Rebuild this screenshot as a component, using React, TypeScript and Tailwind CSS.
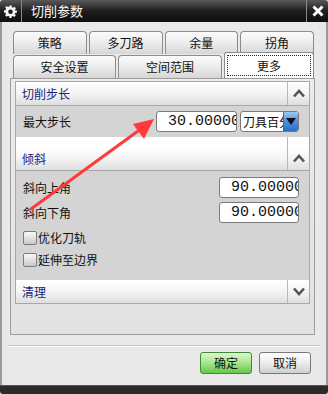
import React from "react";

const font = { fontFamily: '"Noto Sans CJK SC", "Noto Sans", sans-serif' };

function Tab({ label, selected, className = "" }: { label: string; selected?: boolean; className?: string }) {
  if (selected) {
    return (
      <div className={`h-[26px] -mt-[2px] rounded-t-[3px] border border-b-0 border-[#8a8a8a] bg-white p-[2px] ${className}`}>
        <div className="h-full border border-dotted border-[#222] flex items-center justify-center text-[12px] text-[#111]">
          {label}
        </div>
      </div>
    );
  }
  return (
    <div
      className={`h-[23px] rounded-t-[4px] border border-b-0 border-[#8c8c8c] bg-gradient-to-b from-[#fbfbfb] via-[#ececec] to-[#d6d6d6] flex items-center justify-center text-[12px] text-[#111] ${className}`}
    >
      {label}
    </div>
  );
}

function SectionHeader({ title, open }: { title: string; open: boolean }) {
  return (
    <div className="h-[24px] flex border-b border-[#a8a8a8] bg-gradient-to-b from-white via-[#f4f4f4] to-[#dedede]">
      <div className="flex-1 flex items-center pl-[6px] text-[12px] text-[#17237a]">{title}</div>
      <div className="w-[22px] border-l border-[#b8b8b8] flex items-center justify-center">
        <svg width="12" height="9" viewBox="0 0 12 9">
          {open ? (
            <path d="M1 7.5 L6 2 L11 7.5" fill="none" stroke="#555" strokeWidth="2.6" />
          ) : (
            <path d="M1 1.5 L6 7 L11 1.5" fill="none" stroke="#555" strokeWidth="2.6" />
          )}
        </svg>
      </div>
    </div>
  );
}

function NumInput({ value, className = "" }: { value: string; className?: string }) {
  return (
    <div
      className={`h-[21px] rounded-[3px] border border-[#7a7a7a] bg-white overflow-hidden flex items-center pl-[11px] text-[15px] text-[#111] leading-none ${className}`}
      style={{ fontFamily: '"Liberation Mono", monospace' }}
    >
      <span className="whitespace-nowrap">{value}</span>
    </div>
  );
}

function Checkbox({ label }: { label: string }) {
  return (
    <div className="flex items-center gap-[1px] h-[14px]">
      <div className="w-[14px] h-[14px] rounded-[2px] border border-[#7c7c7c] bg-gradient-to-b from-[#f8f8f8] via-[#e2e2e2] to-[#c8c8c8]" />
      <span className="text-[12px] text-[#111]">{label}</span>
    </div>
  );
}

export default function App() {
  return (
    <div className="relative w-[328px] h-[394px] overflow-hidden bg-[#e9e9e9]" style={font}>
      {/* Title bar */}
      <div className="h-[22px] flex items-stretch bg-gradient-to-b from-[#5a5a5a] via-[#1e1e1e] to-[#0e0e0e] rounded-t-[3px]">
        <div className="w-[21px] flex items-center justify-center">
          <svg width="13" height="13" viewBox="0 0 24 24">
            <path
              fill="#f2f2f2"
              d="M10 1h4l.6 3.1a8 8 0 0 1 2.1.9l2.6-1.8 2.8 2.8-1.8 2.6a8 8 0 0 1 .9 2.1L24 10v4l-3.1.6a8 8 0 0 1-.9 2.1l1.8 2.6-2.8 2.8-2.6-1.8a8 8 0 0 1-2.1.9L14 24h-4l-.6-3.1a8 8 0 0 1-2.1-.9l-2.6 1.8-2.8-2.8 1.8-2.6a8 8 0 0 1-.9-2.1L0 14v-4l3.1-.6a8 8 0 0 1 .9-2.1L2.2 4.7 5 1.9l2.6 1.8a8 8 0 0 1 2.1-.9z"
            />
            <circle cx="12" cy="12.5" r="4.2" fill="#1a1a1a" />
          </svg>
        </div>
        <div className="w-[1px] bg-[#8a8a8a]" />
        <div className="flex-1 flex items-center pl-[9px] text-[13px] text-white">切削参数</div>
        <div className="w-[1px] bg-[#8a8a8a]" />
        <div className="w-[21px] flex items-center justify-center">
          <svg width="12" height="12" viewBox="0 0 12 12">
            <path d="M1.5 1.5 L10.5 10.5 M10.5 1.5 L1.5 10.5" stroke="#fff" strokeWidth="3" />
          </svg>
        </div>
      </div>

      {/* Body */}
      <div className="h-[363px] border-l-2 border-r-2 border-[#9a9a9a] flex flex-col">
        {/* Tabs */}
        <div className="mt-[9px] ml-[11px] mr-[12px] flex flex-col">
          <div className="grid grid-cols-4 gap-[2px]">
            <Tab label="策略" />
            <Tab label="多刀路" />
            <Tab label="余量" />
            <Tab label="拐角" />
          </div>
          <div className="flex gap-[2px] items-end">
            <Tab label="安全设置" className="w-[103px]" />
            <Tab label="空间范围" className="w-[104px]" />
            <Tab label="更多" selected className="flex-1 relative z-10" />
          </div>
        </div>

        {/* Panel */}
        <div className="ml-[8px] mr-[11px] h-[257px] border border-[#9c9c9c] bg-gradient-to-b from-[#ececec] to-[#e2e2e2] px-[4px] pt-[2px]">
          <div className="border border-[#a8a8a8] border-b-0">
            <SectionHeader title="切削步长" open />
            <div className="h-[31px] bg-[#d4d4d4] flex items-center pl-[7px] pr-[10px]">
              <span className="text-[12px] text-[#111] flex-1">最大步长</span>
              <NumInput value="30.00000" className="w-[81px]" />
              <div className="ml-[3px] w-[59px] h-[21px] rounded-[3px] border border-[#7a7a7a] bg-white flex overflow-hidden">
                <span className="flex-1 pl-[2px] text-[12px] leading-[19px] whitespace-nowrap overflow-hidden text-[#111]">刀具百分比</span>
                <div className="w-[15px] bg-gradient-to-b from-[#9cc8f4] via-[#4a90e0] to-[#2a6ccc] border-l border-[#3a6aa8] flex items-center justify-center">
                  <svg width="10" height="7" viewBox="0 0 10 7">
                    <path d="M0 0 H10 L5 7z" fill="#111" />
                  </svg>
                </div>
              </div>
            </div>
            <div className="h-[10px] bg-white flex">
              <div className="flex-1" />
              <div className="w-[22px] border-l border-[#b8b8b8]" />
            </div>
            <SectionHeader title="倾斜" open />
            <div className="h-[109px] bg-[#d4d4d4] pl-[7px] pr-[10px] pt-[6px] flex flex-col">
              <div className="flex items-center h-[21px]">
                <span className="flex-1 text-[12px] text-[#111]">斜向上角</span>
                <NumInput value="90.00000" className="w-[80px]" />
              </div>
              <div className="flex items-center h-[21px] mt-[4px]">
                <span className="flex-1 text-[12px] text-[#111]">斜向下角</span>
                <NumInput value="90.00000" className="w-[80px]" />
              </div>
              <div className="mt-[8px] flex flex-col gap-[8px]">
                <Checkbox label="优化刀轨" />
                <Checkbox label="延伸至边界" />
              </div>
            </div>
            <SectionHeader title="清理" open={false} />
          </div>
        </div>

        {/* Separator */}
        <div className="mt-[10px] mx-[5px] h-[2px] border-t border-[#c4c4c4] border-b border-b-white" />

        {/* Buttons */}
        <div className="mt-[5px] flex justify-end gap-[7px] pr-[15px]">
          <button className="w-[52px] h-[22px] rounded-[3px] border border-[#3f8a3a] bg-gradient-to-b from-[#dcf7cf] via-[#a6e48c] to-[#62c846] text-[12px] text-[#111]">
            确定
          </button>
          <button className="w-[52px] h-[22px] rounded-[3px] border border-[#7a7a7a] bg-gradient-to-b from-white via-[#ececec] to-[#cfcfcf] text-[12px] text-[#111]">
            取消
          </button>
        </div>
      </div>

      {/* Bottom bar */}
      <div className="absolute left-0 right-0 bottom-0 h-[9px] bg-[#2a2a2a] border-t border-[#555] rounded-b-[3px]" />

      {/* Red annotation arrow */}
      <svg className="absolute left-0 top-0 pointer-events-none" width="328" height="394">
        <path d="M31 209 L138 131" stroke="#ff3a3a" strokeWidth="3" strokeLinecap="round" />
        <path d="M154 119 L133 124 L144 139 Z" fill="#ff3a3a" />
      </svg>
    </div>
  );
}
